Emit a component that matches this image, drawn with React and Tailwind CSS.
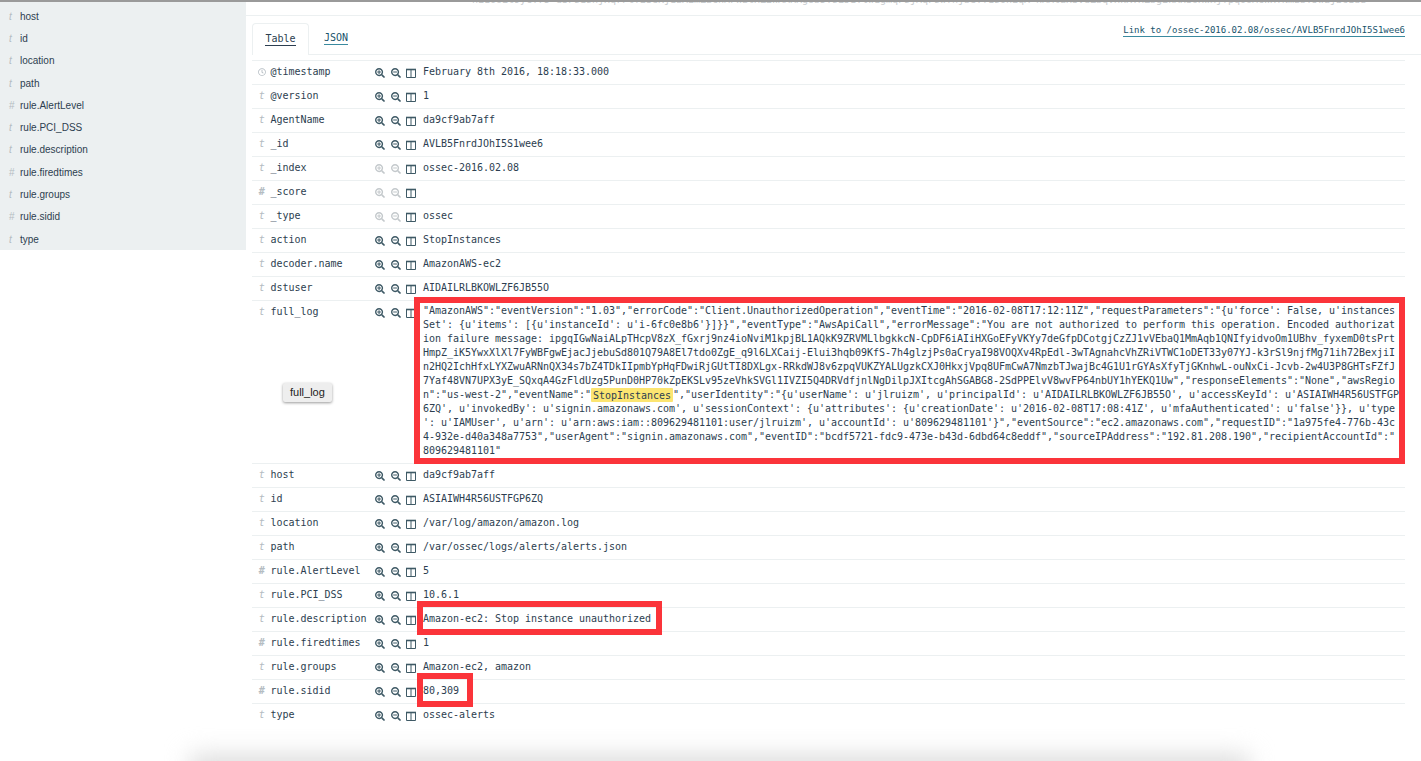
import React from 'react'
import { FaSearchPlus, FaSearchMinus, FaRegClock } from 'react-icons/fa'

const mono = "font-['DejaVu_Sans_Mono','Liberation_Mono',monospace]"

const sidebarFields = [
  ['t', 'host'],
  ['t', 'id'],
  ['t', 'location'],
  ['t', 'path'],
  ['#', 'rule.AlertLevel'],
  ['t', 'rule.PCI_DSS'],
  ['t', 'rule.description'],
  ['#', 'rule.firedtimes'],
  ['t', 'rule.groups'],
  ['#', 'rule.sidid'],
  ['t', 'type'],
]

const rows = [
  { type: 'clock', name: '@timestamp', value: 'February 8th 2016, 18:18:33.000' },
  { type: 't', name: '@version', value: '1' },
  { type: 't', name: 'AgentName', value: 'da9cf9ab7aff' },
  { type: 't', name: '_id', value: 'AVLB5FnrdJOhI5S1wee6' },
  { type: 't', name: '_index', value: 'ossec-2016.02.08', faded: true },
  { type: '#', name: '_score', value: '', faded: true },
  { type: 't', name: '_type', value: 'ossec', faded: true },
  { type: 't', name: 'action', value: 'StopInstances' },
  { type: 't', name: 'decoder.name', value: 'AmazonAWS-ec2' },
  { type: 't', name: 'dstuser', value: 'AIDAILRLBKOWLZF6JB55O' },
  { type: 't', name: 'full_log', log: true },
  { type: 't', name: 'host', value: 'da9cf9ab7aff' },
  { type: 't', name: 'id', value: 'ASIAIWH4R56USTFGP6ZQ' },
  { type: 't', name: 'location', value: '/var/log/amazon/amazon.log' },
  { type: 't', name: 'path', value: '/var/ossec/logs/alerts/alerts.json' },
  { type: '#', name: 'rule.AlertLevel', value: '5' },
  { type: 't', name: 'rule.PCI_DSS', value: '10.6.1' },
  { type: 't', name: 'rule.description', value: 'Amazon-ec2: Stop instance unauthorized', box: 'w-[245px]' },
  { type: '#', name: 'rule.firedtimes', value: '1' },
  { type: 't', name: 'rule.groups', value: 'Amazon-ec2, amazon' },
  { type: '#', name: 'rule.sidid', value: '80,309', box: 'w-[56px]' },
  { type: 't', name: 'type', value: 'ossec-alerts' },
]

const logLines = [
  `"AmazonAWS":"eventVersion":"1.03","errorCode":"Client.UnauthorizedOperation","eventTime":"2016-02-08T17:12:11Z","requestParameters":"{u'force': False, u'instances`,
  `Set': {u'items': [{u'instanceId': u'i-6fc0e8b6'}]}}","eventType":"AwsApiCall","errorMessage":"You are not authorized to perform this operation. Encoded authorizat`,
  `ion failure message: ipgqIGwNaiALpTHcpV8zX_fGxrj9nz4ioNviM1kpjBL1AQkK9ZRVMLlbgkkcN-CpDF6iAIiHXGoEFyVKYy7deGfpDCotgjCzZJ1vVEbaQ1MmAqb1QNIfyidvoOm1UBhv_fyxemD0tsPrt`,
  `HmpZ_iK5YwxXlXl7FyWBFgwEjacJjebuSd801Q79A8El7tdo0ZgE_q9l6LXCaij-Elui3hqb09KfS-7h4glzjPs0aCryaI98VOQXv4RpEdl-3wTAgnahcVhZRiVTWC1oDET33y07YJ-k3rSl9njfMg71ih72BexjiI`,
  `n2HQ2IchHfxLYXZwuARNnQX34s7bZ4TDkIIpmbYpHqFDwiRjGUtTI8DXLgx-RRkdWJ8v6zpqVUKZYALUgzkCXJ0HkxjVpq8UFmCwA7NmzbTJwajBc4G1U1rGYAsXfyTjGKnhwL-ouNxCi-Jcvb-2w4U3P8GHTsFZfJ`,
  `7Yaf48VN7UPX3yE_SQxqA4GzFldUzg5PunD0HP70kZpEKSLv95zeVhkSVGl1IVZI5Q4DRVdfjnlNgDilpJXItcgAhSGABG8-2SdPPElvV8wvFP64nbUY1hYEKQ1Uw","responseElements":"None","awsRegio`,
  null,
  `6ZQ', u'invokedBy': u'signin.amazonaws.com', u'sessionContext': {u'attributes': {u'creationDate': u'2016-02-08T17:08:41Z', u'mfaAuthenticated': u'false'}}, u'type`,
  `': u'IAMUser', u'arn': u'arn:aws:iam::809629481101:user/jlruizm', u'accountId': u'809629481101'}","eventSource":"ec2.amazonaws.com","requestID":"1a975fe4-776b-43c`,
  `4-932e-d40a348a7753","userAgent":"signin.amazonaws.com","eventID":"bcdf5721-fdc9-473e-b43d-6dbd64c8eddf","sourceIPAddress":"192.81.208.190","recipientAccountId":"`,
  `809629481101"`,
]

const ColumnIcon = () => (
  <svg viewBox="0 0 10 10" className="h-[10px] w-[10px] shrink-0 text-[#3f5a66]" fill="none" stroke="currentColor">
    <path d="M0.5 1.5h9v8h-9z" strokeWidth="1" />
    <path d="M0 1.5h10" strokeWidth="1.6" />
    <path d="M5 1.5v8" strokeWidth="1" />
  </svg>
)

const TypeIcon = ({ type }) => {
  if (type === 'clock') return <FaRegClock className="h-[8px] w-[8px] text-[#b4bcc2]" />
  if (type === '#') return <span className="font-bold italic text-[#b4bcc2]">#</span>
  return <span className="italic text-[#b4bcc2]">t</span>
}

const FieldActions = ({ faded }) => {
  const tone = faded ? 'text-[#c4c9cc]' : 'text-[#3f5a66]'
  return (
    <div className="flex w-[48px] shrink-0 items-center gap-[5.5px] pt-[1px]">
      <FaSearchPlus className={`h-[10px] w-[10px] shrink-0 ${tone}`} />
      <FaSearchMinus className={`h-[10px] w-[10px] shrink-0 ${tone}`} />
      <ColumnIcon />
    </div>
  )
}

const LogValue = () => (
  <div className="relative pt-[3px] pb-[5px] leading-[14px]">
    {logLines.map((line, i) =>
      line === null ? (
        <div key={i} className="whitespace-pre">
          {`n":"us-west-2","eventName":"`}
          <mark className="rounded-[1px] bg-[#fce571] px-[2px] py-[1.5px] text-[#2c3e50]">StopInstances</mark>
          {`","userIdentity":"{u'userName': u'jlruizm', u'principalId': u'AIDAILRLBKOWLZF6JB55O', u'accessKeyId': u'ASIAIWH4R56USTFGP`}
        </div>
      ) : (
        <div key={i} className="whitespace-pre">{line}</div>
      )
    )}
    <div className="pointer-events-none absolute -top-[4px] -bottom-[1px] -left-[9px] w-[991px] border-[6px] border-[#fb343a]" />
  </div>
)

const Row = ({ row }) => (
  <div className="flex min-h-[24px] border-b border-[#ecf0f1] leading-[21px] last:border-b-0">
    <div className="flex h-[21px] w-[18.5px] shrink-0 items-center justify-center pl-[1px]">
      <TypeIcon type={row.type} />
    </div>
    <div className="w-[104.5px] shrink-0 whitespace-pre">{row.name}</div>
    <div className="flex h-[23px] items-center"><FieldActions faded={row.faded} /></div>
    {row.log ? (
      <LogValue />
    ) : (
      <div className="relative whitespace-pre">
        {row.value}
        {row.box && (
          <div className={`pointer-events-none absolute -top-[7px] -left-[6px] h-[34px] ${row.box} border-[6px] border-[#fb343a]`} />
        )}
      </div>
    )}
  </div>
)

export default function App() {
  return (
    <div className="relative h-[761px] w-[1421px] overflow-hidden bg-white text-[#2c3e50]">
      <div className="relative z-10 h-[2px] bg-[#9a9a9a]" />
      <div className="flex">
        <aside className="h-[248px] w-[246px] shrink-0 bg-[#ecf0f1] pt-[3px] font-['Liberation_Sans',sans-serif] text-[10px] text-[#2c3e50]">
          {sidebarFields.map(([type, name]) => (
            <div key={name} className="flex h-[22.3px] items-center">
              <span className="w-[20px] pl-[9px] text-[#b4bcc2]">
                <span className={type === 't' ? 'italic' : ''}>{type}</span>
              </span>
              <span>{name}</span>
            </div>
          ))}
        </aside>
        <main className={`min-w-0 flex-1 text-[10px] tracking-[-0.02px] ${mono}`}>
          <div className="h-[14px] overflow-hidden border-b border-[#ecf0f1]">
            <div className="-mt-[7px] pl-[226px] leading-[10px] whitespace-pre text-[#c9cdd0]">
              hE16oEt9yCY75-d3Fs1snjHqrFtf23eKj1zAEmZzCnMFWztHZ2WAARRgUb5YsEJ1Tlw1gmqFsjMqFswfhjbeTf1sOhEqX-hMMtaHSVdZbqVxkRTHZbgEkXHSoHwxjfpqOoMcWHfNmzbTJwajBc1du
            </div>
          </div>
          <div className="pl-[6px]">
            <div className="flex h-[39px] items-end justify-between border-b border-[#ecf0f1] pr-[16px]">
              <div className="flex items-end">
                <div className="-mb-[1px] flex h-[32px] w-[57px] items-center justify-center rounded-t-[4px] border border-b-0 border-[#ecf0f1] bg-white pb-[2px]">
                  <span className="border-b border-[#2c3e50] leading-[13px]">Table</span>
                </div>
                <div className="-mb-[1px] flex h-[32px] w-[54px] items-center justify-center pb-[2px] text-[#18536b]">
                  <span className="border-b border-[#3a8a9f] leading-[13px]">JSON</span>
                </div>
              </div>
              <a className="mb-[17px] border-b border-[#3a8a9f] text-[9px] leading-[12px] tracking-normal text-[#18536b]">
                Link to /ossec-2016.02.08/ossec/AVLB5FnrdJOhI5S1wee6
              </a>
            </div>
            <div className="mt-[5px] mr-[16px] border-t border-[#ecf0f1]">
              {rows.map((row) => (
                <Row key={row.name} row={row} />
              ))}
            </div>
          </div>
        </main>
      </div>
      <div className="absolute top-[383px] left-[283px] rounded-[2px] bg-[#eeeeee] px-[7px] py-[2px] font-['Liberation_Sans',sans-serif] text-[11px] leading-[15px] text-[#222] shadow-[0_1px_3px_rgba(0,0,0,0.4)]">
        full_log
      </div>
      <div className="pointer-events-none absolute right-[172px] -bottom-[26px] left-[190px] h-[32px] bg-[#dcdcdc] blur-[12px]" />
    </div>
  )
}
